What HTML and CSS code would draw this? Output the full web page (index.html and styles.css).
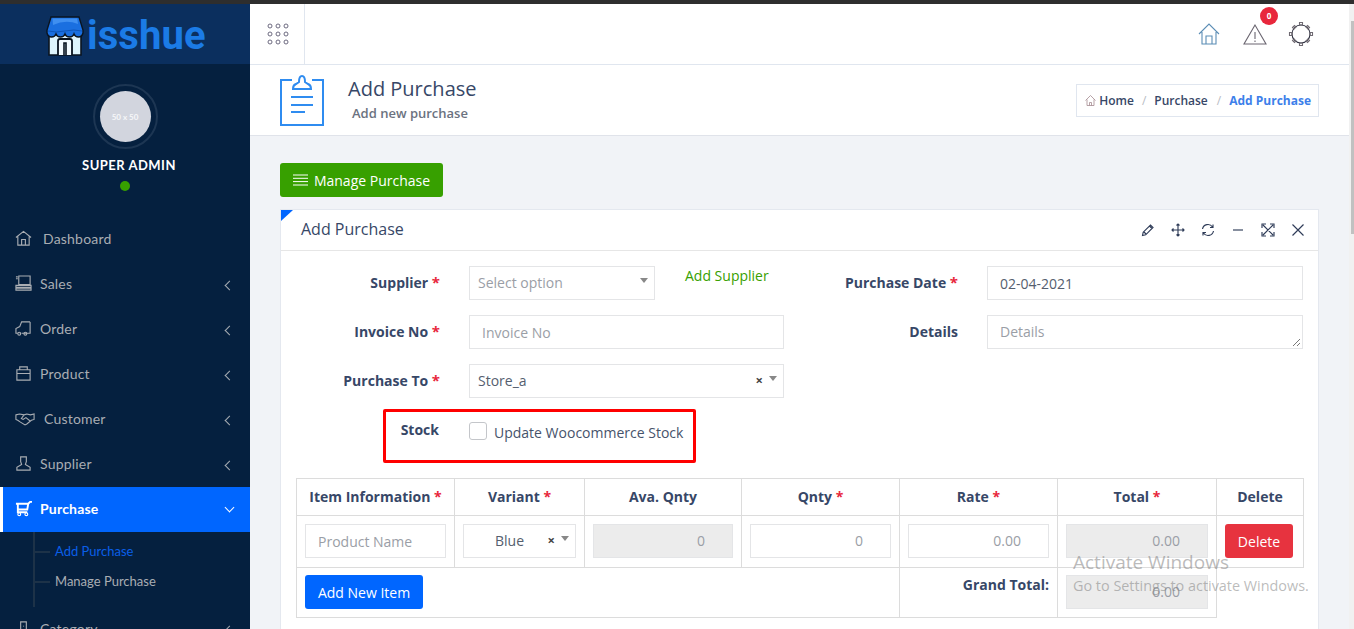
FILE: index.html
```html
<!doctype html>
<html>
<head>
	<meta charset="utf-8">
	<title>Add Purchase</title>
	<link rel="stylesheet" href="styles.css">
</head>
<body>

	<div class="topstrip"></div>

	<div class="app">

		<aside class="sidebar">
			<div class="brand">
				<svg class="brand-icon" width="38" height="40" viewBox="0 0 38 40">
					<path d="M3 17h32v22H3z" fill="#dff5fd" stroke="#0a1420" stroke-width="1.600"/>
					<path d="M12 39V25q0-2 2-2h10q2 0 2 2v14" fill="#f4fbff" stroke="#0a1420" stroke-width="1.800"/>
					<path d="M18 39V27h2v12" fill="#dff5fd" stroke="#0a1420" stroke-width="1.600"/>
					<path d="M5 1h28l4 13v3q-1 4-4.500 4T28 18q-1 3-4.500 3T19 18q-1 3-4.500 3T10 18q-1 3-4.500 3T1 17v-3z" fill="#1a6fe0" stroke="#0a1420" stroke-width="1.400"/>
					<path d="M7 9Q20 3 32 8l-.8-5.500H6.500z" fill="#3f8ff0"/>
					<path d="M2 15q8 2 17 0t17 0" fill="none" stroke="#0f55b8" stroke-width="1"/>
				</svg>
				<span class="brand-name">isshue</span>
			</div>
			<div class="profile">
				<div class="avatar-ring"><div class="avatar">50 x 50</div></div>
				<div class="profile-name">SUPER ADMIN</div>
				<div class="online-dot"></div>
			</div>
			<ul class="menu">
				<li class="menu-item">
					<svg class="menu-icon" viewBox="0 0 18 18"><path d="M1 8l8-6.500L17 8M3 7v9h12V7M7 16v-6h4v6" /></svg>
					<span class="menu-label label-dash">Dashboard</span>
				</li>
				<li class="menu-item">
					<svg class="menu-icon" viewBox="0 0 18 18"><path d="M4 1h12v9H4zM1 2h2M1 4h2M1 11h16v2H1zM1 14h16v2H1z" /></svg>
					<span class="menu-label">Sales</span>
					<span class="chev"></span>
				</li>
				<li class="menu-item">
					<svg class="menu-icon" viewBox="0 0 18 18"><path d="M16 2H7L5 7 1 9v5h2M16 2v12H7M5 14h1" /><circle cx="4.500" cy="14.500" r="1.500"/><circle cx="11" cy="14.500" r="1.500"/></svg>
					<span class="menu-label">Order</span>
					<span class="chev"></span>
				</li>
				<li class="menu-item">
					<svg class="menu-icon" viewBox="0 0 18 18"><path d="M2 5h14v11H2zM2 9h14M5 5V2h8v3" /></svg>
					<span class="menu-label">Product</span>
					<span class="chev"></span>
				</li>
				<li class="menu-item">
					<svg class="menu-icon menu-icon-wide" viewBox="0 0 22 18"><path d="M1 5l4-1 5 1 3-1 4 1 4-1v6l-3 1-5 4-2 1-5-3-3-2-2-1zM10 5L7 9l2 1 3-2 5 4" /></svg>
					<span class="menu-label label-cust">Customer</span>
					<span class="chev"></span>
				</li>
				<li class="menu-item">
					<svg class="menu-icon" viewBox="0 0 18 18"><path d="M6 2h6v5l-1 3 5 3v3H2v-3l5-3-1-3z" /></svg>
					<span class="menu-label">Supplier</span>
					<span class="chev"></span>
				</li>
				<li class="menu-item active">
					<svg class="menu-icon" viewBox="0 0 18 18"><path d="M1 4h13l2-2h2M3 4v6h10l1-6M3 10v3h10" stroke-width="2"/><circle cx="4.500" cy="15" r="1.500"/><circle cx="12" cy="15" r="1.500"/></svg>
					<span class="menu-label">Purchase</span>
					<span class="chev chev-down"></span>
				</li>
				<li class="submenu">
					<a class="sub-link current">Add Purchase</a>
					<a class="sub-link">Manage Purchase</a>
				</li>
				<li class="menu-item">
					<svg class="menu-icon" viewBox="0 0 18 18"><path d="M6 2h6v14H6zM9 6v1" /></svg>
					<span class="menu-label">Category</span>
					<span class="chev"></span>
				</li>
			</ul>
		</aside>

		<main class="main">
			<header class="topbar">
				<div class="apps-btn">
					<svg width="22" height="22" viewBox="0 0 22 22" class="apps-icon">
						<circle cx="3" cy="3" r="2"/><circle cx="11" cy="3" r="2"/><circle cx="19" cy="3" r="2"/>
						<circle cx="3" cy="11" r="2"/><circle cx="11" cy="11" r="2"/><circle cx="19" cy="11" r="2"/>
						<circle cx="3" cy="19" r="2"/><circle cx="11" cy="19" r="2"/><circle cx="19" cy="19" r="2"/>
					</svg>
				</div>
				<div class="top-icons">
					<svg class="top-icon" width="22" height="22" viewBox="0 0 22 22"><path d="M1 11L11 1l10 10M4 9v12h14V9M8 21v-8h6v8" stroke="#5b8db5"/></svg>
					<div class="alert-wrap">
						<svg class="top-icon" width="24" height="22" viewBox="0 0 24 22"><path d="M12 2L1 21h22zM12 9v7M12 17.500v1.500" stroke="#6a6570"/></svg>
						<span class="alert-badge">0</span>
					</div>
					<svg class="top-icon" width="26" height="26" viewBox="0 0 26 26">
						<circle cx="13" cy="13" r="9" stroke="#2f3242"/>
						<path d="M11.500 1.500h3v2.500h-3zM11.500 22h3v2.500h-3zM1.500 11.500H4v3H1.500zM22 11.500h2.500v3H22zM4.500 6.500l2-2 1.500 1.500-2 2zM18 20l2-2 1.500 1.500-2 2zM19.500 4.500l2 2-1.500 1.500-2-2zM6 18l2 2-1.500 1.500-2-2z" stroke="#6f6a72"/>
					</svg>
				</div>
			</header>

			<section class="pagehead">
				<svg class="pagehead-icon" width="44" height="52" viewBox="0 0 44 52">
					<path d="M12 6H1v45h42V6H32" />
					<path d="M13 15q0-4 3-5l3-2q0-6 3-6t3 6l3 2q3 1 3 5z" />
					<path d="M11 23h22M11 31h22M11 38h14" stroke-width="2"/>
				</svg>
				<div class="pagehead-text">
					<h1>Add Purchase</h1>
					<p>Add new purchase</p>
				</div>
				<ol class="crumbs">
					<li><svg width="11" height="11" viewBox="0 0 11 11" class="crumb-home"><path d="M.5 5.500l5-5 5 5M2 4.500v6h7v-6M4.500 10.500v-3h2v3"/></svg>Home</li>
					<li class="crumb-sep">/</li>
					<li>Purchase</li>
					<li class="crumb-sep crumb-sep-last">/</li>
					<li class="crumb-now">Add Purchase</li>
				</ol>
			</section>

			<section class="content">
				<a class="btn btn-green">
					<svg width="15" height="12" viewBox="0 0 15 12" class="bars"><path d="M0 1h15M0 4.300h15M0 7.600h15M0 11h15"/></svg>
					Manage Purchase
				</a>

				<div class="card">
					<div class="card-head">
						<h2>Add Purchase</h2>
						<div class="card-tools">
							<svg class="tool" viewBox="0 0 14 14"><path d="M1.500 12.500l.7-3.300L9.500 2l2.500 2.500-7.300 7.300zM8.500 3l2.500 2.500M3 9l2 2"/></svg>
							<svg class="tool" viewBox="0 0 14 14"><path d="M7 1v12M1 7h12M5.500 2.500L7 1l1.500 1.500M5.500 11.500L7 13l1.500-1.500M2.500 5.500L1 7l1.500 1.500M11.500 5.500L13 7l-1.500 1.500"/></svg>
							<svg class="tool" viewBox="0 0 14 14"><path d="M1.500 6a5.500 5.500 0 0 1 10-2M12.500 8a5.500 5.500 0 0 1-10 2M9 4.500h3v-3M5 9.500H2v3"/></svg>
							<svg class="tool" viewBox="0 0 14 14"><path d="M2 7h10"/></svg>
							<svg class="tool" viewBox="0 0 14 14"><path d="M2 2l10 10M12 2L2 12M1 5V1h4M9 1h4v4M13 9v4H9M5 13H1V9"/></svg>
							<svg class="tool" viewBox="0 0 14 14"><path d="M1.500 1.500l11 11M12.500 1.500l-11 11"/></svg>
						</div>
					</div>

					<div class="card-body">
						<div class="form-grid">
							<div class="form-col">
								<div class="form-row">
									<label class="form-label">Supplier <i>*</i></label>
									<div class="select select-short"><span class="select-hint">Select option</span><span class="caret"></span></div>
									<a class="add-link">Add Supplier</a>
								</div>
								<div class="form-row">
									<label class="form-label">Invoice No <i>*</i></label>
									<input class="field field-wide" type="text" placeholder="Invoice No">
								</div>
								<div class="form-row">
									<label class="form-label">Purchase To <i>*</i></label>
									<div class="select select-wide"><span class="select-val">Store_a</span><span class="clear">×</span><span class="caret"></span></div>
								</div>
							</div>
							<div class="form-col">
								<div class="form-row">
									<label class="form-label form-label-r">Purchase Date <i>*</i></label>
									<input class="field field-wide" type="text" value="02-04-2021">
								</div>
								<div class="form-row">
									<label class="form-label form-label-r">Details</label>
									<div class="textarea">Details<svg class="grip" width="9" height="9" viewBox="0 0 9 9"><path d="M1 8l7-7M5 8l3-3"/></svg></div>
								</div>
							</div>
						</div>

						<div class="stock-row">
							<label class="stock-label">Stock</label>
							<span class="checkbox"></span>
							<span class="stock-text">Update Woocommerce Stock</span>
						</div>

						<table class="items">
							<colgroup>
								<col class="c1"><col class="c2"><col class="c3"><col class="c4"><col class="c5"><col class="c6"><col class="c7">
							</colgroup>
							<thead>
								<tr>
									<th>Item Information <i>*</i></th>
									<th>Variant <i>*</i></th>
									<th>Ava. Qnty</th>
									<th>Qnty <i>*</i></th>
									<th>Rate <i>*</i></th>
									<th>Total <i>*</i></th>
									<th>Delete</th>
								</tr>
							</thead>
							<tbody>
								<tr>
									<td><input class="field cell-field" type="text" placeholder="Product Name"></td>
									<td><div class="select cell-select"><span class="select-val">Blue</span><span class="clear">×</span><span class="caret"></span></div></td>
									<td><div class="field cell-field num off">0</div></td>
									<td><div class="field cell-field num">0</div></td>
									<td><div class="field cell-field num">0.00</div></td>
									<td><div class="field cell-field num off">0.00</div></td>
									<td><a class="btn btn-red">Delete</a></td>
								</tr>
							</tbody>
							<tfoot>
								<tr>
									<td colspan="4"><a class="btn btn-blue">Add New Item</a></td>
									<td class="grand-label">Grand Total:</td>
									<td><div class="field cell-field num off">0.00</div></td>
								</tr>
							</tfoot>
						</table>
					</div>
				</div>
			</section>
		</main>

		<div class="scrollbar"><div class="scroll-thumb"></div></div>
	</div>

	<div class="watermark">
		<div class="wm-big">Activate Windows</div>
		<div class="wm-small">Go to Settings to activate Windows.</div>
	</div>

</body>
</html>
```

FILE: styles.css
```css
* {box-sizing:border-box; margin:0; padding:0;}
html, body {height:100%; overflow:hidden;}
body {font:14px "Open Sans",sans-serif; color:#374767; background:#f1f3f7;}
i {font-style:normal; color:#e8273c;}

.topstrip {height:4px; background:#2e2e2e;}
.app {display:flex; height:625px;}

/* sidebar */
.sidebar {width:250px; flex:none; background:#05203f; color:#a9adb3; font-family:"Lato",sans-serif; overflow:hidden;}
.brand {height:60px; background:#0b2f5e; display:flex; align-items:flex-end; padding:0 0 8px 46px;}
.brand-icon {margin-right:3px;}
.brand-name {font:700 40px/40px "Roboto",sans-serif; color:#1b7be6; letter-spacing:.1px;}
.profile {height:150px; display:flex; flex-direction:column; align-items:center; padding-top:20px;}
.avatar-ring {width:65px; height:65px; border:2px solid #1d3653; border-radius:50%; display:flex; align-items:center; justify-content:center;}
.avatar {width:51px; height:51px; border-radius:50%; background:#d2d5de; color:#f6f7f9; font-size:8px; font-weight:700; display:flex; align-items:center; justify-content:center;}
.profile-name {margin-top:7px; padding-left:8px; font-size:13px; font-weight:700; color:#fff; letter-spacing:.5px; line-height:18px;}
.online-dot {margin-top:7px; width:10px; height:10px; border-radius:50%; background:#37a000;}
.menu {list-style:none; margin-top:3px;}
.menu-item {height:45px; display:flex; align-items:center; padding:0 17px 2px 15px; font-size:14px; letter-spacing:.2px;}
.menu-icon {width:17px; height:17px; flex:none; fill:none; stroke:#a9adb3; stroke-width:1.200;}
.menu-icon-wide {width:20px;}
.menu-label {margin-left:8px; flex:1;}
.label-dash {margin-left:11px;}
.label-cust {margin-left:9px;}
.chev {width:7px; height:7px; border-left:1px solid #a9adb3; border-bottom:1px solid #a9adb3; transform:rotate(45deg); margin-top:3px;}
.menu-item.active {background:#0066ff; color:#fff; border-left:3px solid #fff; padding-left:12px; font-weight:700;}
.menu-item.active .menu-icon {stroke:#fff;}
.chev-down {border-color:#fff; transform:rotate(-45deg); margin-top:-2px; border-width:1.500px;}
.submenu {height:75px; margin-left:33px; border-left:2px solid #1d3248; padding-top:4px; display:flex; flex-direction:column;}
.sub-link {height:30px; line-height:30px; position:relative; padding-left:20px; font-size:13px;}
.sub-link::before {content:""; position:absolute; left:0; top:15px; width:15px; height:2px; background:#1d3248;}
.sub-link.current {color:#0a5fe8;}

/* top */
.main {flex:1; min-width:0; display:flex; flex-direction:column;}
.topbar {height:61px; flex:none; background:#fff; border-bottom:1px solid #e0e6ef; display:flex; justify-content:space-between; align-items:center;}
.apps-btn {width:55px; height:100%; border-right:1px solid #e0e6ef; display:flex; align-items:center; padding-left:17px;}
.apps-icon circle {fill:none; stroke:#6d6a80; stroke-width:1;}
.top-icons {display:flex; align-items:center; gap:23px; padding-right:35px;}
.top-icons > svg:last-child {margin-left:-2px;}
.top-icon {fill:none; display:block;}
.top-icon path, .top-icon circle {stroke-width:1.100;}
.alert-wrap {position:relative;}
.alert-badge {position:absolute; left:17px; top:-16px; width:18px; height:18px; border-radius:50%; background:#e8273c; color:#fff; font-size:8px; font-weight:700; text-align:center; line-height:18px;}

.pagehead {height:71px; flex:none; background:#fff; border-bottom:1px solid #e0e3ea; display:flex; align-items:center; padding:0 30px;}
.pagehead-icon {fill:none; stroke:#2f8cf0; stroke-width:2; flex:none;}
.pagehead-text {margin:0 0 3px 24px; flex:1;}
.pagehead-text h1 {font-size:20px; font-weight:400; line-height:28px; color:#374767;}
.pagehead-text p {font-size:13px; font-weight:600; color:#6b7280; margin:1px 0 0 4px; line-height:18px;}
.crumbs {list-style:none; display:flex; align-items:center; gap:8px; height:33px; margin-top:1px; padding:0 7px 0 8px; background:#fff; border:1px solid #e0e6ef; font-size:12px; font-weight:600; color:#374767;}
.crumbs li {white-space:nowrap;}
.crumb-home {fill:none; stroke:#a58a90; stroke-width:.8; margin-right:3px; vertical-align:-1px;}
.crumb-sep {color:#b8bcc4; font-weight:400;}
.crumb-sep-last {margin-left:1px;}
.crumb-now {color:#3d7fea; font-weight:700;}

/* content */
.content {padding:27px 30px 0 30px;}
.btn {display:inline-flex; align-items:center; justify-content:center; border-radius:3px; color:#fff; font-size:14px; height:34px;}
.btn-green {background:#37a000; width:163px; gap:6px;}
.bars {fill:none; stroke:#fff; stroke-width:1;}
.btn-red {background:#e7333f; width:68px;}
.btn-blue {background:#0066ff; width:118px;}

.card {margin-top:12px; background:#fff; border:1px solid #e4e8ef; border-bottom:0; position:relative; height:420px;}
.card::before {content:""; position:absolute; left:0; top:0; border-top:11px solid #0066ff; border-right:12px solid transparent;}
.card-head {height:41px; border-bottom:1px solid #e6e6e6; display:flex; align-items:center; justify-content:space-between; padding:0 13px 0 20px;}
.card-head h2 {font-size:16px; font-weight:400; color:#374767; margin-bottom:2px;}
.card-tools {display:flex; gap:16px;}
.tool {width:14px; height:14px; fill:none; stroke:#2f3c58; stroke-width:1.150;}

.card-body {padding:15px 14px 0 15px;}
.form-grid {display:grid; grid-template-columns:488px 503px; gap:0 16px;}
.form-row {display:flex; align-items:center; height:34px; margin-bottom:15px;}
.form-label {width:144px; flex:none; text-align:right; font-weight:700; margin-right:29px; white-space:nowrap; margin-top:-2px;}
.form-label i {font-size:15px; line-height:1;}
.form-label-r {width:158px;}
.select {border:1px solid #e4e5e7; height:34px; display:flex; align-items:center; background:#fff; padding:0 0 2px 8px; color:#555e6e;}
.select-short {width:186px;}
.select-wide {width:315px;}
.select-hint {flex:1; color:#9a9ea6;}
.select-val {flex:1; color:#555e6e;}
.caret {border-top:5px solid #888; border-left:4px solid transparent; border-right:4px solid transparent; margin:-3px 6px 0 0;}
.clear {font-weight:700; font-size:13px; margin-right:6px; color:#444;}
.add-link {margin-left:30px; color:#37a000; margin-top:-15px;}
.field {font:14px "Open Sans",sans-serif; border:1px solid #e4e5e7; height:34px; padding:0 12px; color:#555e6e; background:#fff; outline:0; display:block;}
.field::placeholder {color:#9a9ea6; opacity:1;}
.field-wide {width:316px;}
.form-col:first-child .field-wide {width:315px;}
.textarea {width:316px; height:34px; border:1px solid #e4e5e7; padding:6px 12px 0; color:#9a9ea6; position:relative;}
.grip {position:absolute; right:1px; bottom:1px; fill:none; stroke:#555; stroke-width:.8;}

.stock-row {display:flex; align-items:flex-start; margin:-4px 0 0 87px; width:313px; height:54px; border:3px solid #f00; border-radius:2px; padding-top:8px;}
.stock-label {width:53px; text-align:right; font-weight:700; margin-right:30px;}
.checkbox {width:18px; height:18px; border:1px solid #c4c6ca; border-radius:3px; margin-top:2px;}
.stock-text {margin-left:7px; margin-top:3px; color:#46536b;}

.items {margin-top:15px; width:1008px; border-collapse:collapse; table-layout:fixed;}
.items th, .items td {border:1px solid #dcdcdc; padding:8px; vertical-align:top;}
.items th {height:37px; font-weight:700; text-align:center; padding:8px 4px 0; white-space:nowrap;}
.items tbody td {height:52px;}
.items tfoot td {height:49px; padding-top:7px;}
.c1 {width:158px;} .c2 {width:130px;} .c3 {width:157px;} .c4 {width:158px;} .c5 {width:158px;} .c6 {width:159px;} .c7 {width:87px;}
.cell-field {width:100%; line-height:32px;}
.cell-select {padding-left:31px;}
.num {text-align:right; color:#9a9ea6; padding-right:27px;}
.off {background:#ececec; color:#9a9ea6;}
.items tfoot td.grand-label {text-align:right; font-weight:700;}

.scrollbar {width:5px; flex:none; background:#f1f1f1; padding:17px 0 0 2px;}
.scroll-thumb {height:213px; background:#c1c1c1;}

/* windows overlay */
.watermark {position:absolute; left:1073px; top:549px; color:rgba(120,120,120,.5); pointer-events:none;}
.wm-big {font-size:19px; line-height:27px;}
.wm-small {font-size:14.400px; line-height:20px; white-space:nowrap;}
```
